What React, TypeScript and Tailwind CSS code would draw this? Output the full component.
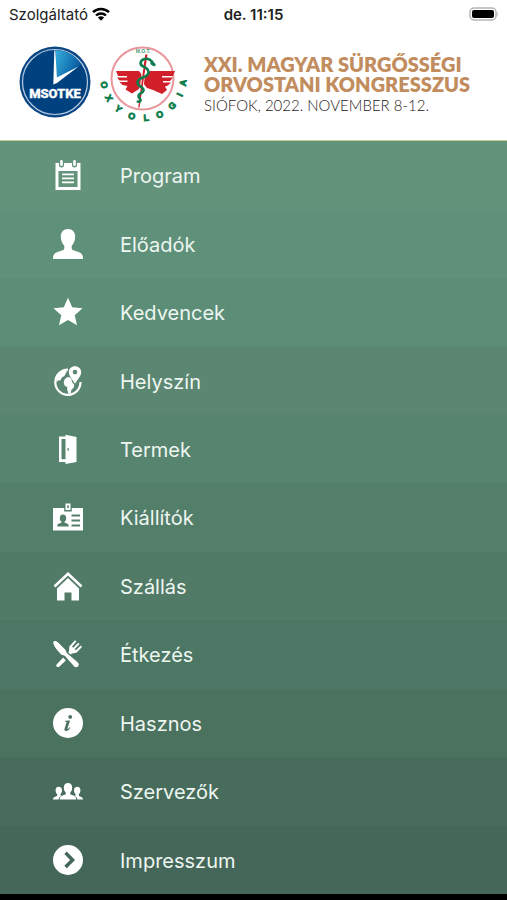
import type { ReactNode } from "react";

interface MenuItem {
  label: string;
  href: string;
  tone: string;
  icon: ReactNode;
}

const menu: MenuItem[] = [
  {
    label: "Program",
    href: "#program",
    tone: "bg-[#63937b]",
    icon: (
      <>
        <path
          fillRule="evenodd"
          d="M3 3h3v2a2 2 0 0 0 5 0V3h8v2a2 2 0 0 0 5 0V3h3.500v27H2.500V3zM5.500 11v16h19V11z"
        />
        <rect x="7.200" y="0" width="2.600" height="6" rx="1.300" />
        <rect x="20.200" y="0" width="2.600" height="6" rx="1.300" />
        <path d="M9 13.500h12v1.700H9zM9 17.500h12v1.700H9zM9 21.500h12v1.700H9z" />
      </>
    ),
  },
  {
    label: "Előadók",
    href: "#eloadok",
    tone: "bg-[#5f917a]",
    icon: (
      <path d="M15 0c4.400 0 7.200 3 7.200 7.500 0 3.800-1.400 7.300-3.500 9.200v2.700c0 1.400 2.300 2.100 5.300 3 3.700 1.100 6 2.300 6 7.600H0c0-5.300 2.300-6.500 6-7.600 3-.9 5.300-1.600 5.300-3v-2.700C9.200 14.800 7.800 11.300 7.800 7.500 7.800 3 10.600 0 15 0z" />
    ),
  },
  {
    label: "Kedvencek",
    href: "#kedvencek",
    tone: "bg-[#5c8d76]",
    icon: (
      <path d="M15 .8l4.200 9.500 10.300 1-7.800 6.900 2.300 10.100L15 23l-9 5.300 2.300-10.100L.5 11.300l10.300-1z" />
    ),
  },
  {
    label: "Helyszín",
    href: "#helyszin",
    tone: "bg-[#5b8772]",
    icon: (
      <>
        <path
          d="M15 3.700A12.600 12.600 0 1 0 27.500 16"
          fill="none"
          stroke="currentColor"
          strokeWidth="2.200"
        />
        <path d="M3.500 11C5 7.500 8 5 12 4.200l2 1.300-1.500 2.300-1 2.200-2.700 1.500-1.300 2.700-2.500.3-1.500 2z" />
        <path d="M11.500 13.500l2.500-2.300h2.500l1.700 1.200.8 3.600 2.400 3-1 3-2 1.800-.6 3.500-2.300.5-1.400-4.300.2-2.500-2.600-1.300-1-3z" />
        <path
          fillRule="evenodd"
          d="M22 .2c3.500 0 6.200 2.500 6.200 6 0 3.500-2.900 6.100-6.200 11.600-3.300-5.500-6.200-8.100-6.200-11.600C15.800 2.700 18.500.2 22 .2zM22 3.800a2.300 2.300 0 1 0 0 4.600 2.300 2.300 0 0 0 0-4.600z"
        />
      </>
    ),
  },
  {
    label: "Termek",
    href: "#termek",
    tone: "bg-[#57846f]",
    icon: (
      <path
        fillRule="evenodd"
        d="M6 2.500h6.500V.8L23.500 3v25l-11 2v-2H6zM8.500 5v20.300h4V5zM14.500 14v2.800l1.400-.2v-2.400z"
      />
    ),
  },
  {
    label: "Kiállítók",
    href: "#kiallitok",
    tone: "bg-[#537e6a]",
    icon: (
      <>
        <path
          fillRule="evenodd"
          d="M12.500 1.500h5V8h-5zM14.200 3.500v2.300h1.800V3.500z"
        />
        <path
          fillRule="evenodd"
          d="M0 6h11.200v3.500h7.600V6H30v22.500H0zM10 12.500c-2.100 0-3.200 1.500-3.200 3.500 0 1.600.6 2.900 1.600 3.700v1.100c-2.300.7-4.200.9-4.200 3.800h11.600c0-2.900-1.900-3.100-4.200-3.800v-1.100c1-.8 1.600-2.100 1.600-3.700 0-2-1.100-3.500-3.200-3.500zM18.500 12.500v2H27v-2zM18.500 17.500v2H27v-2zM18.500 22.500v2H27v-2z"
        />
      </>
    ),
  },
  {
    label: "Szállás",
    href: "#szallas",
    tone: "bg-[#517a67]",
    icon: (
      <>
        <path
          d="M1.500 15.500L15 2.800l13.500 12.700"
          fill="none"
          stroke="currentColor"
          strokeWidth="2.600"
        />
        <path d="M15 7l11 10.400V29.500h-7.500v-8h-7v8H4V17.400z" />
      </>
    ),
  },
  {
    label: "Étkezés",
    href: "#etkezes",
    tone: "bg-[#4c7764]",
    icon: (
      <>
        <path d="M.8 2.200C1.800 1.600 3.400 2 4.600 3.100l7.800 7.700 1.400 3.100 10.800 9.300c1.800 1.600 1.300 3.800.1 4.600-1 .8-2.800.6-3.900-.7l-9-10.300-3.300-1C5.300 12.300.8 7.600.4 4.300.3 3.500.3 2.600.8 2.200z" />
        <path d="M3.800 25.200l6.400-6.600 2.600 2.900-6.300 6c-1.900 1.700-4.400-.5-2.700-2.300z" />
        <path d="M16 12.500l.3-5 5.700-6.200 1.400 1.100-4.400 5.200 1.200 1.100 5-5 1.400 1.300-4.900 5.100 1.200 1.100 4.800-4.600 1.300 1.400-5.600 5.800-4.300.6-1.300 1.200-2.600-2.200z" />
      </>
    ),
  },
  {
    label: "Hasznos",
    href: "#hasznos",
    tone: "bg-[#4b715f]",
    icon: (
      <path
        fillRule="evenodd"
        d="M15 0a15 15 0 1 1 0 30 15 15 0 0 1 0-30zM17.200 7a1.900 1.900 0 1 0 0 3.800 1.900 1.900 0 0 0 0-3.800zM12.200 12.700v1l1.500.4-2.100 6.300c-.5 1.700.1 2.500 1.500 2.500 1.700 0 3.200-1.300 4.200-3.200l-.8-.4c-.8 1.200-1.600 1.800-1.900 1.600-.2-.1-.1-.5 0-.9l2.500-7.500z"
      />
    ),
  },
  {
    label: "Szervezők",
    href: "#szervezok",
    tone: "bg-[#476c5b]",
    icon: (
      <>
        <path d="M15 7c2.700 0 4.200 1.800 4.200 4.500 0 2.200-.7 4-1.900 5V18c0 1.200 6 1 6 5.400H6.700c0-4.400 6-4.200 6-5.400v-1.500c-1.200-1-1.900-2.800-1.900-5C10.800 8.800 12.300 7 15 7z" />
        <path d="M5.700 10.700c2 0 3.300 1.500 3.300 3.500 0 1.600-.6 3.100-1.500 3.900v1.200l1.100.5c-1.800 1-2.700 2-3 3.600H0c0-3.300 4.100-2.700 4.100-4v-1.300c-.9-.8-1.500-2.300-1.500-3.900 0-2 1.100-3.500 3.100-3.500z" />
        <path d="M24.300 10.700c-2 0-3.300 1.500-3.300 3.500 0 1.600.6 3.100 1.500 3.900v1.200l-1.100.5c1.800 1 2.700 2 3 3.600H30c0-3.300-4.100-2.700-4.100-4v-1.300c.9-.8 1.500-2.300 1.500-3.900 0-2-1.100-3.500-3.100-3.500z" />
      </>
    ),
  },
  {
    label: "Impresszum",
    href: "#impresszum",
    tone: "bg-[#446759]",
    icon: (
      <path
        fillRule="evenodd"
        d="M15 0a15 15 0 1 1 0 30 15 15 0 0 1 0-30zM11.300 9.100l5.800 5.800-5.800 5.800 2.500 2.500 8.200-8.300-8.200-8.300z"
      />
    ),
  },
];

// Letters around the lower half of the emblem, angle in degrees from straight down
const ring = [
  { letter: "O", angle: 80 },
  { letter: "X", angle: 60 },
  { letter: "Y", angle: 39 },
  { letter: "O", angle: 17 },
  { letter: "L", angle: -4 },
  { letter: "O", angle: -24 },
  { letter: "G", angle: -46 },
  { letter: "I", angle: -65 },
  { letter: "A", angle: -83 },
];

function StatusBar() {
  return (
    <div className="grid h-7 grid-cols-3 items-center px-[9px] text-[15px] leading-none text-[#222]">
      <div className="flex items-center gap-1">
        <span>Szolgáltató</span>
        <svg viewBox="0 0 18 14" className="h-3.5 w-[18px] shrink-0" fill="none" stroke="#000">
          <path d="M1 5.200a11.500 11.500 0 0 1 16 0" strokeWidth="2.500" />
          <path d="M4 8.500a7.200 7.200 0 0 1 10 0" strokeWidth="2.300" />
          <path d="M9 13.800L5.900 10.600a4.500 4.500 0 0 1 6.200 0z" fill="#000" stroke="none" />
        </svg>
      </div>
      <span className="text-center font-semibold">de. 11:15</span>
      <svg viewBox="0 0 30 15" className="h-[15px] w-[30px] justify-self-end">
        <rect x="2" y="1" width="26" height="12" rx="4" fill="#fff" stroke="#b5b5b5" strokeWidth="1.500" />
        <rect x="4" y="3" width="22" height="8" rx="2" fill="#000" />
        <path d="M29 4.700q1.700 2.300 0 4.600z" fill="#b5b5b5" />
      </svg>
    </div>
  );
}

function MsotkeLogo() {
  return (
    <svg viewBox="0 0 72 76" className="h-[76px] w-[72px] shrink-0" role="img" aria-label="MSOTKE">
      <defs>
        <linearGradient id="sector" x1="0" y1="0" x2="1" y2="0.500">
          <stop offset="0" stopColor="#35b0df" />
          <stop offset="1" stopColor="#06549a" />
        </linearGradient>
      </defs>
      <circle cx="36" cy="36" r="35.500" fill="#0b4685" />
      <circle cx="36" cy="36" r="32.500" fill="#00417f" stroke="#b9cde2" strokeWidth="1.200" />
      <path d="M36.500 4.200A32 32 0 0 1 62.500 18.500L37 36z" fill="url(#sector)" />
      <path d="M35.300 4.500h1l1.600 27L59.500 20.500 38 37l-3.700 1.500z" fill="#fff" />
      <text
        x="36"
        y="52"
        textAnchor="middle"
        fill="#fff"
        stroke="#fff"
        strokeWidth="0.400"
        className="font-['Roboto',sans-serif] text-[13px] font-extrabold"
      >
        MSOTKE
      </text>
    </svg>
  );
}

function OxyologiaLogo() {
  return (
    <svg viewBox="-2 0 90 80" className="h-20 w-[90px] shrink-0" role="img" aria-label="MOT Oxyologia">
      <circle cx="42.500" cy="34.500" r="31" fill="#fff" stroke="#e9979c" strokeWidth="2" />
      <text
        x="43"
        y="9"
        textAnchor="middle"
        fill="#4c9b78"
        className="font-['Liberation_Sans',sans-serif] text-[5px] font-bold"
      >
        M.O.T.
      </text>
      <path
        d="M16 27h23l3 4v8l-3 6-7 4.500-6.500-4 2-3.500-5-1-3-3h8v-1.500h-8L17 33.500h10V32H18zM75 27H50l-4 4-3 1v7l4 5 6 2 9 4 5-4-2-3.500 3-1 3-3h-8v-1.500h7l3-3.500H62V32h11z"
        fill="#d2202b"
      />
      <path d="M46 10.500L39 63" stroke="#fff" strokeWidth="3.500" />
      <path d="M45.200 10.500h2.300L39.500 63.500h-1.300z" fill="#d2202b" />
      <path
        d="M53 20c-1-4-5-6-8.500-5-5 1.500-5 6-1 7.500 4 1.700 6 4.500 4.500 7.500-2 4-10.500 3.500-10.500 8.500 0 4.500 6.500 4 6 8-.5 3-5 2.500-5 5.500 0 2.300 2.500 2.500 2 4.500-.5 1.600-2.500 1.400-3.500.5"
        fill="none"
        stroke="#0b7c4b"
        strokeWidth="2.600"
      />
      <ellipse cx="53" cy="20" rx="3" ry="1.800" fill="#0b7c4b" transform="rotate(30 53 20)" />
      {ring.map(({ letter, angle }) => (
        <text
          key={angle}
          x="43.500"
          y="77"
          textAnchor="middle"
          fill="#0b7c4b"
          stroke="#0b7c4b"
          strokeWidth="0.800"
          transform={`rotate(${angle} 43.500 34)`}
          className="font-['Liberation_Sans',sans-serif] text-[9px] font-bold"
        >
          {letter}
        </text>
      ))}
    </svg>
  );
}

export default function App() {
  return (
    <div className="flex min-h-screen flex-col bg-black font-['Inter',sans-serif]">
      <header className="border-b border-[#c3cf9c] bg-white">
        <StatusBar />
        <div className="flex items-center py-4 pl-[19px]">
          <MsotkeLogo />
          <div className="pl-[7px]">
            <OxyologiaLogo />
          </div>
          <div className="pt-0.5 pl-4 font-['Lato',sans-serif]">
            <h1 className="text-[20px] leading-5 font-extrabold text-[#c28d5e]">
              XXI. MAGYAR SÜRGŐSSÉGI
              <br />
              ORVOSTANI KONGRESSZUS
            </h1>
            <p className="text-[15px] leading-[22px] font-light text-[#2a211b]">SIÓFOK, 2022. NOVEMBER 8-12.</p>
          </div>
        </div>
      </header>
      <nav className="mb-1.5 grid flex-1 auto-rows-fr">
        {menu.map((item) => (
          <a
            key={item.href}
            href={item.href}
            className={`flex min-h-14 items-center gap-[37px] px-[53px] text-[20px] text-[#eef6f1] ${item.tone}`}
          >
            <svg viewBox="0 0 30 30" className="size-[30px] shrink-0 text-white" fill="currentColor">
              {item.icon}
            </svg>
            <span className="pt-0.5">{item.label}</span>
          </a>
        ))}
      </nav>
    </div>
  );
}
